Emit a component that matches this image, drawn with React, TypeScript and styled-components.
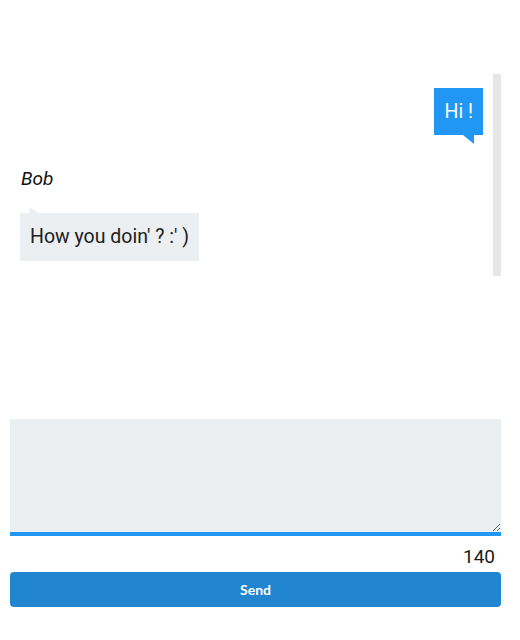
import React, { useState } from "react";
import styled, { createGlobalStyle } from "styled-components";

const GlobalStyle = createGlobalStyle`
	body {
		margin: 0;
		background: #ffffff;
		font-family: Roboto, "Liberation Sans", sans-serif;
		color: #212121;
	}
	* {
		box-sizing: border-box;
	}
`;

const MAX_LENGTH = 140;

const messages = [
	{ id: 1, author: "me", text: "Hi !" },
	{ id: 2, author: "Bob", text: "How you doin' ? :' )" },
];

export default function App() {
	const [draft, setDraft] = useState("");

	return (
		<Page>
			<GlobalStyle />
			<MessageList>
				{messages.map((message) =>
					message.author === "me" ? (
						<OutgoingRow key={message.id}>
							<OutgoingBubble>{message.text}</OutgoingBubble>
						</OutgoingRow>
					) : (
						<IncomingRow key={message.id}>
							<AuthorName>{message.author}</AuthorName>
							<IncomingBubble>{message.text}</IncomingBubble>
						</IncomingRow>
					)
				)}
			</MessageList>

			<Composer>
				<MessageInput
					value={draft}
					maxLength={MAX_LENGTH}
					onChange={(event) => setDraft(event.target.value)}
				/>
				<Counter>{MAX_LENGTH - draft.length}</Counter>
				<SendButton type="button">Send</SendButton>
			</Composer>
		</Page>
	);
}

const Page = styled.div`
	display: flex;
	flex-direction: column;
	padding: 74px 19px 0 10px;
	width: 520px;
`;

const MessageList = styled.div`
	display: flex;
	flex-direction: column;
	height: 202px;
	padding: 14px 10px 0 10px;
	border-right: 8px solid #e6e6e6;
`;

const OutgoingRow = styled.div`
	display: flex;
	justify-content: flex-end;
`;

const Bubble = styled.div`
	position: relative;
	padding: 10px;
	font-size: 19.5px;
	line-height: 27px;
`;

const OutgoingBubble = styled(Bubble)`
	background: #2196f3;
	color: #ffffff;

	&::after {
		content: "";
		position: absolute;
		top: 100%;
		right: 9px;
		width: 0;
		height: 0;
		border-top: 9px solid #2196f3;
		border-left: 11px solid transparent;
	}
`;

const IncomingRow = styled.div`
	display: flex;
	flex-direction: column;
	align-items: flex-start;
	margin-top: 33px;
`;

const AuthorName = styled.div`
	font-size: 19px;
	font-style: italic;
	line-height: 21px;
	padding-left: 1px;
	color: #111111;
`;

const IncomingBubble = styled(Bubble)`
	margin-top: 24px;
	background: #eceff1;
	color: #212121;
	line-height: 28px;

	&::before {
		content: "";
		position: absolute;
		bottom: 100%;
		left: 9px;
		width: 0;
		height: 0;
		border-bottom: 6px solid #eceff1;
		border-right: 10px solid transparent;
	}
`;

const Composer = styled.div`
	display: flex;
	flex-direction: column;
	margin-top: 143px;
`;

const MessageInput = styled.textarea`
	display: block;
	width: 100%;
	height: 117px;
	margin: 0;
	padding: 10px;
	border: none;
	border-bottom: 4px solid #2196f3;
	background: #eceff1;
	font-family: Roboto, "Liberation Sans", sans-serif;
	font-size: 18px;
	outline: none;
`;

const Counter = styled.div`
	margin-top: 10px;
	padding-right: 6px;
	text-align: right;
	font-size: 19px;
	line-height: 21px;
	color: #1a1a1a;
`;

const SendButton = styled.button`
	margin-top: 5px;
	height: 35px;
	border: none;
	border-radius: 4px;
	background: #2185d0;
	color: #ffffff;
	font-family: Lato, "Liberation Sans", sans-serif;
	font-size: 14px;
	font-weight: 700;
	cursor: pointer;
`;
